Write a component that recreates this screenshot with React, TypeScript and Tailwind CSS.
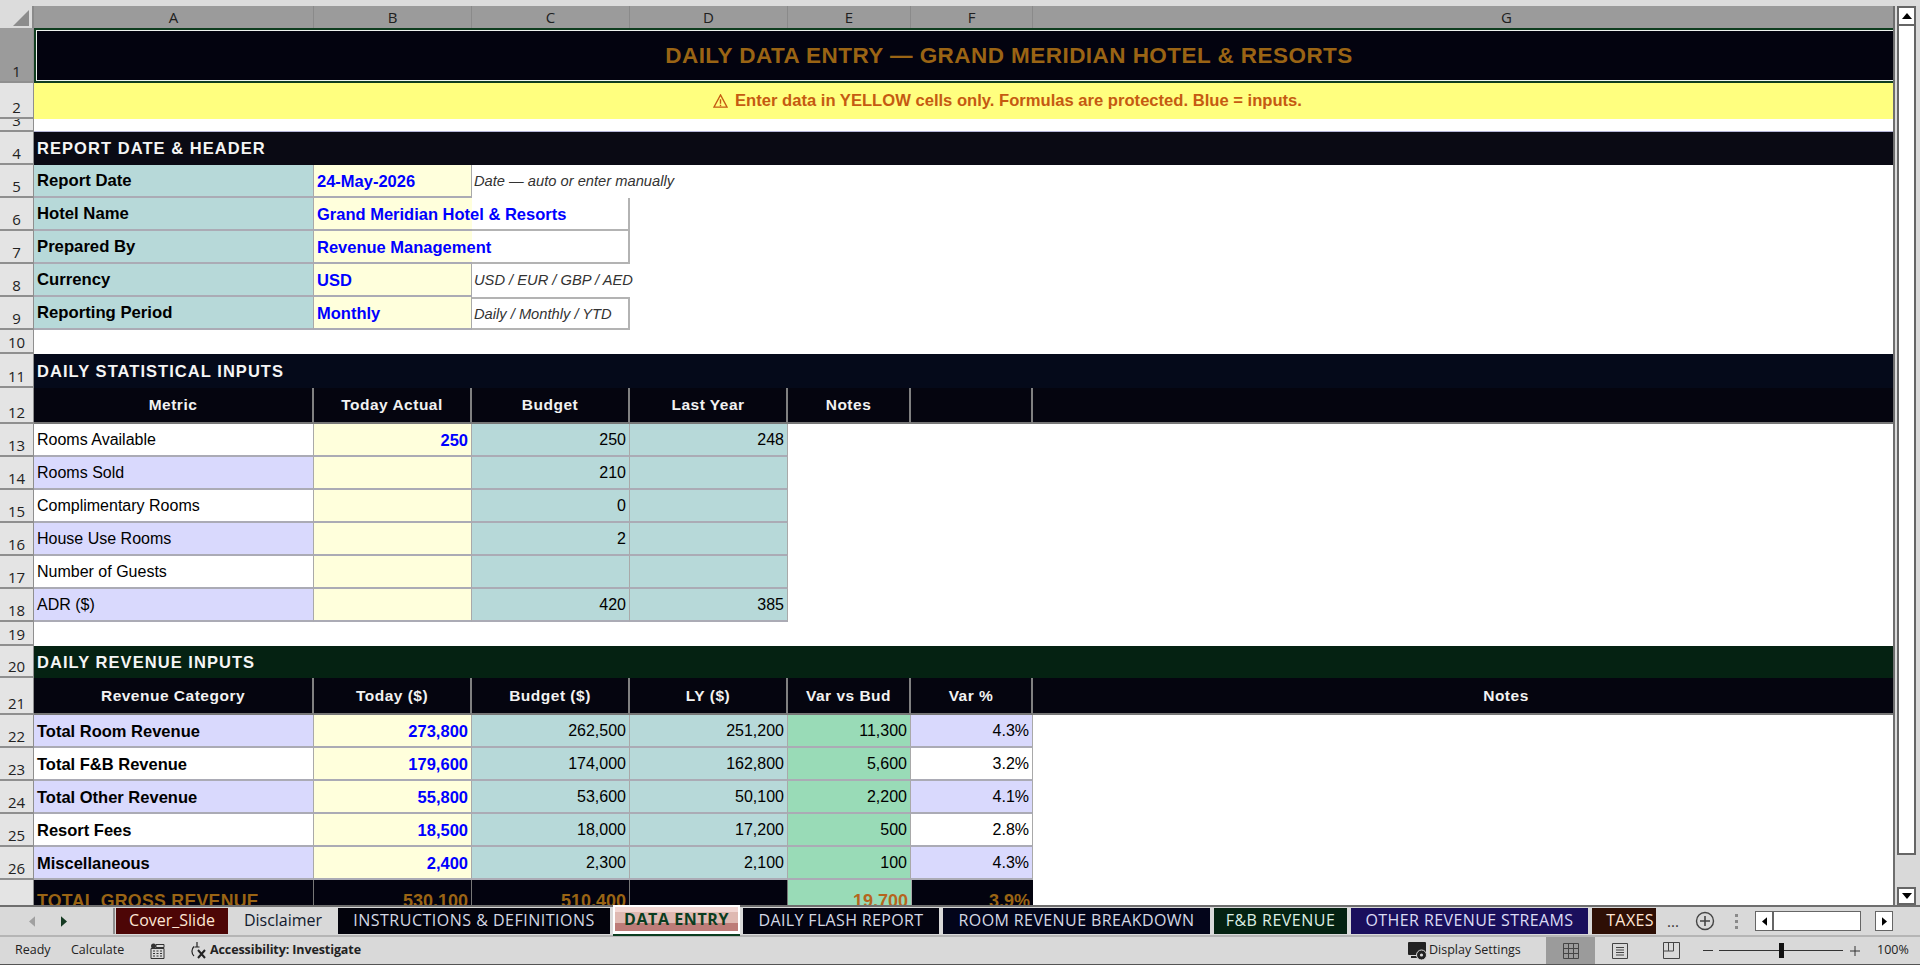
import React from 'react';

const cols = 'grid grid-cols-[34px_280px_158px_158px_158px_123px_122px_948px]';

const A = 'flex items-center px-[3px] pt-[1px] whitespace-nowrap overflow-visible relative';
const line = 'border-b-2 border-r border-b-[#ababb5] border-r-[#a9a9a9]';
const teal = `${A} ${line} bg-[#b7d9d9] text-black`;
const inputCell = `${A} ${line} bg-[#ffffdc] text-[#0000ff] font-bold text-[16.5px]`;
const note = 'flex items-center px-[2px] whitespace-nowrap text-[#333333] italic text-[14.7px]';
const num = 'justify-end';
const lav = 'bg-[#d9d9fd]';
const wht = 'bg-white';
const hdr = 'flex items-center justify-center bg-[#05050f] text-[#f2f2f2] font-bold tracking-[0.5px] border-b-2 border-r-2 border-b-[#777777] border-r-[#808080] text-[15.5px] whitespace-nowrap';

function RowHead({ n, selected }: { n: number; selected?: boolean }) {
  return (
    <div
      className={`flex items-end justify-center overflow-hidden border-b-2 border-r border-b-[#8f8f8f] border-r-[#8f8f8f] pb-[2px] text-[15px] leading-[15px] text-[#222222] [font-family:'Open_Sans',sans-serif] ${
        selected ? 'bg-[#9b9b9b]' : 'bg-[#e4e4e4]'
      }`}
    >
      {n}
    </div>
  );
}

function Row({ n, h, children, selected }: { n: number; h: string; children?: React.ReactNode; selected?: boolean }) {
  return (
    <div className={`${cols} ${h} shrink-0`}>
      <RowHead n={n} selected={selected} />
      {children}
    </div>
  );
}

const Section = ({ title, bg }: { title: string; bg: string }) => (
  <div className={`col-span-7 flex items-center px-[3px] text-[16.5px] font-bold tracking-[1.05px] text-[#f5f5f5] ${bg}`}>{title}</div>
);

const statRows = [
  { label: 'Rooms Available', today: '250', bud: '250', ly: '248', bg: wht },
  { label: 'Rooms Sold', today: '', bud: '210', ly: '', bg: lav },
  { label: 'Complimentary Rooms', today: '', bud: '0', ly: '', bg: wht },
  { label: 'House Use Rooms', today: '', bud: '2', ly: '', bg: lav },
  { label: 'Number of Guests', today: '', bud: '', ly: '', bg: wht },
  { label: 'ADR ($)', today: '', bud: '420', ly: '385', bg: lav },
];

const revRows = [
  { label: 'Total Room Revenue', today: '273,800', bud: '262,500', ly: '251,200', vb: '11,300', pct: '4.3%', bg: lav },
  { label: 'Total F&B Revenue', today: '179,600', bud: '174,000', ly: '162,800', vb: '5,600', pct: '3.2%', bg: wht },
  { label: 'Total Other Revenue', today: '55,800', bud: '53,600', ly: '50,100', vb: '2,200', pct: '4.1%', bg: lav },
  { label: 'Resort Fees', today: '18,500', bud: '18,000', ly: '17,200', vb: '500', pct: '2.8%', bg: wht },
  { label: 'Miscellaneous', today: '2,400', bud: '2,300', ly: '2,100', vb: '100', pct: '4.3%', bg: lav },
];

const headerRows = [
  { n: 5, label: 'Report Date', value: '24-May-2026', note: 'Date — auto or enter manually', kind: 'plain' },
  { n: 6, label: 'Hotel Name', value: 'Grand Meridian Hotel & Resorts', note: '', kind: 'merged' },
  { n: 7, label: 'Prepared By', value: 'Revenue Management', note: '', kind: 'merged' },
  { n: 8, label: 'Currency', value: 'USD', note: 'USD / EUR / GBP / AED', kind: 'plain' },
  { n: 9, label: 'Reporting Period', value: 'Monthly', note: 'Daily / Monthly / YTD', kind: 'boxed' },
];

const tabs = [
  { t: 'Cover_Slide', w: 'w-[112px]', c: 'bg-[#4d0606] text-[#ffe6d5]' },
  { t: 'Disclaimer', w: 'w-[106px]', c: 'text-[#10182c]' },
  { t: 'INSTRUCTIONS & DEFINITIONS', w: 'w-[272px]', c: 'bg-[#03030c] text-[#d5d9e6] tracking-[0.5px]' },
];
const tabsRight = [
  { t: 'DAILY FLASH REPORT', w: 'w-[196px]', c: 'bg-[#03030f] text-[#d5d9e6] tracking-[0.35px] justify-center' },
  { t: 'ROOM REVENUE BREAKDOWN', w: 'w-[267px]', c: 'bg-[#03051a] text-[#d5d9e6] tracking-[0.4px] justify-center' },
  { t: 'F&B REVENUE', w: 'w-[133px]', c: 'bg-[#042211] text-[#dff0e6] tracking-[0.5px] justify-center' },
  { t: 'OTHER REVENUE STREAMS', w: 'w-[237px]', c: 'bg-[#1a0f5c] text-[#dcdcf5] tracking-[0.4px] justify-center' },
  { t: 'TAXES', w: 'w-[64px]', c: 'bg-[#2e0f05] text-[#ffe6d5] tracking-[0.4px] justify-end pr-[2px]' },
];

function Triangle({ dir, className }: { dir: 'up' | 'down' | 'left' | 'right'; className?: string }) {
  const pts = { up: '0,7 12,7 6,0', down: '0,0 12,0 6,7', left: '7,0 7,12 0,6', right: '0,0 0,12 7,6' }[dir];
  const box = dir === 'up' || dir === 'down' ? '0 0 12 7' : '0 0 7 12';
  return (
    <svg viewBox={box} className={className}>
      <polygon points={pts} fill="currentColor" />
    </svg>
  );
}

export default function App() {
  return (
    <div className="flex h-[965px] w-[1920px] flex-col overflow-hidden bg-[#d9d9d9] text-[16px] [font-family:'Liberation_Sans',Arial,sans-serif]">
      <div className="h-[6px] shrink-0 bg-[#dcdcdc]" />
      <div className="flex h-[899px] shrink-0">
        {/* sheet */}
        <div className="flex h-full w-[1893px] shrink-0 flex-col overflow-hidden bg-white">
          <div className={`${cols} h-[22px] shrink-0 bg-[#9b9b9b] text-[15px] text-[#202020] [font-family:'Open_Sans',sans-serif]`}>
            <div className="relative overflow-hidden border-r-2 border-r-[#8a8a8a] bg-[#dcdcdc]">
              <svg viewBox="0 0 16 16" className="absolute bottom-[2px] right-[3px] h-[16px] w-[16px]">
                <polygon points="0,16 16,16 16,0" fill="#8c8c8c" />
              </svg>
            </div>
            {['A', 'B', 'C', 'D', 'E', 'F', 'G'].map((l) => (
              <div key={l} className="flex items-center justify-center border-r border-r-[#8a8a8a] leading-none">
                {l}
              </div>
            ))}
          </div>

          <Row n={1} h="h-[55px]" selected>
            <div className="col-span-7 flex border-y-2 border-l-2 border-[#0f3d1f] bg-[#03030f]">
              <div className="flex flex-1 items-center justify-center whitespace-nowrap border-y border-l border-[#eef2ee] text-[22.5px] font-bold tracking-[0.45px] text-[#9a6414]">
                DAILY DATA ENTRY — GRAND MERIDIAN HOTEL &amp; RESORTS
              </div>
            </div>
          </Row>
          <Row n={2} h="h-[36px]">
            <div className="col-span-7 flex items-center justify-center gap-[7px] bg-[#ffff7f] text-[16.6px] font-bold text-[#c55a11]">
              <svg viewBox="0 0 16 15" className="h-[14px] w-[15px]">
                <path d="M8 1 15 14H1Z" fill="none" stroke="currentColor" strokeWidth="1.4" />
                <path d="M8 5.5v5M8 11.5v1.5" stroke="currentColor" strokeWidth="1.5" />
              </svg>
              <span>Enter data in YELLOW cells only. Formulas are protected. Blue = inputs.</span>
            </div>
          </Row>
          <Row n={3} h="h-[13px]">
            <div className="col-span-7 border-b border-b-[#b6b6d8] bg-white" />
          </Row>
          <Row n={4} h="h-[33px]">
            <Section title="REPORT DATE & HEADER" bg="bg-[#0a0a14] pb-[1px]" />
          </Row>
          {headerRows.map((r) => (
            <Row key={r.n} n={r.n} h="h-[33px]">
              <div className={`${teal} text-[16.7px] font-bold`}>{r.label}</div>
              <div className={`${inputCell} ${r.kind === 'merged' ? 'z-10 border-r-0' : ''}`}>{r.value}</div>
              {r.kind === 'plain' && <div className={note}>{r.note}</div>}
              {r.kind === 'merged' && <div className="border-b-2 border-r-2 border-[#b3b3b3]" />}
              {r.kind === 'boxed' && <div className={`${note} border-y-2 border-r-2 border-[#b3b3b3] pt-[1px]`}>{r.note}</div>}
              <div className="col-span-4" />
            </Row>
          ))}
          <Row n={10} h="h-[24px]" />
          <Row n={11} h="h-[34px]">
            <Section title="DAILY STATISTICAL INPUTS" bg="bg-[#050a1a]" />
          </Row>
          <Row n={12} h="h-[36px]">
            <div className={hdr}>Metric</div>
            <div className={hdr}>Today Actual</div>
            <div className={hdr}>Budget</div>
            <div className={hdr}>Last Year</div>
            <div className={hdr}>Notes</div>
            <div className={hdr} />
            <div className={`${hdr} border-r-0`} />
          </Row>
          {statRows.map((r, i) => (
            <Row key={r.label} n={13 + i} h="h-[33px]">
              <div className={`${A} ${line} ${r.bg} text-black`}>{r.label}</div>
              <div className={`${inputCell} ${num}`}>{r.today}</div>
              <div className={`${teal} ${num}`}>{r.bud}</div>
              <div className={`${teal} ${num}`}>{r.ly}</div>
              <div className="col-span-3" />
            </Row>
          ))}
          <Row n={19} h="h-[24px]" />
          <Row n={20} h="h-[32px]">
            <Section title="DAILY REVENUE INPUTS" bg="bg-[#052212]" />
          </Row>
          <Row n={21} h="h-[37px]">
            <div className={hdr}>Revenue Category</div>
            <div className={hdr}>Today ($)</div>
            <div className={hdr}>Budget ($)</div>
            <div className={hdr}>LY ($)</div>
            <div className={hdr}>Var vs Bud</div>
            <div className={hdr}>Var %</div>
            <div className={`${hdr} border-r-0`}>Notes</div>
          </Row>
          {revRows.map((r, i) => (
            <Row key={r.label} n={22 + i} h="h-[33px]">
              <div className={`${A} ${line} ${r.bg} text-[16.5px] font-bold text-black`}>{r.label}</div>
              <div className={`${inputCell} ${num}`}>{r.today}</div>
              <div className={`${teal} ${num}`}>{r.bud}</div>
              <div className={`${teal} ${num}`}>{r.ly}</div>
              <div className={`${A} ${line} ${num} bg-[#99dbb7] text-black`}>{r.vb}</div>
              <div className={`${A} ${line} ${num} ${r.bg} text-black`}>{r.pct}</div>
              <div />
            </Row>
          ))}
          <Row n={27} h="h-[42px]">
            <div className={`${A} border-r border-r-[#777777] bg-[#03030f] text-[17.7px] font-bold tracking-[0.3px] text-[#9a6414]`}>TOTAL GROSS REVENUE</div>
            <div className={`${A} ${num} border-r border-r-[#777777] bg-[#03030f] text-[18px] font-bold text-[#9a6414]`}>530,100</div>
            <div className={`${A} ${num} border-r border-r-[#777777] bg-[#03030f] text-[18px] font-bold text-[#9a6414]`}>510,400</div>
            <div className={`${A} border-r border-r-[#777777] bg-[#03030f]`} />
            <div className={`${A} ${num} bg-[#99dbb7] text-[18px] font-bold text-[#b5651d]`}>19,700</div>
            <div className={`${A} ${num} border-l border-l-[#a9a9a9] bg-[#03030f] text-[18px] font-bold text-[#9a6414]`}>3.9%</div>
            <div />
          </Row>
        </div>

        {/* vertical scrollbar */}
        <div className="flex w-[27px] shrink-0 flex-col">
          <div className="flex h-full w-[23px] flex-col border-l-2 border-l-[#6e6e6e] pl-[2px]">
            <div className="flex h-[20px] w-[19px] items-center justify-center border-2 border-[#666666] bg-white">
              <Triangle dir="up" className="h-[6px] w-[10px] text-black" />
            </div>
            <div className="h-[829px] w-[19px] shrink-0 border-x-2 border-b-2 border-[#666666] bg-white" />
            <div className="flex-1" />
            <div className="flex h-[18px] w-[19px] items-center justify-center border-2 border-[#666666] bg-white">
              <Triangle dir="down" className="h-[6px] w-[10px] text-black" />
            </div>
          </div>
        </div>
      </div>

      {/* sheet tabs */}
      <div className="flex h-[32px] shrink-0 items-start border-y-2 border-[#6e6e6e] border-b-[#b5b5b5] bg-[#d9d9d9] text-[16px] leading-[22px] [font-family:'Open_Sans',sans-serif]">
        <div className="flex h-full w-[113px] shrink-0 items-center pl-[29px] pr-[13px]">
          <Triangle dir="left" className="h-[11px] w-[6px] text-[#a0a0a0]" />
          <Triangle dir="right" className="ml-[26px] h-[11px] w-[6px] text-[#153a22]" />
        </div>
        <div className="mt-[1px] flex h-[26px] items-stretch gap-[2px] border-l-2 border-l-[#8f8f8f] pl-[1px]">
          {tabs.map((t) => (
            <div key={t.t} className={`flex items-center justify-center whitespace-nowrap pb-[3px] ${t.w} ${t.c}`}>
              {t.t}
            </div>
          ))}
        </div>
        <div className="relative -mt-[2px] ml-[3px] flex h-[29px] w-[127px] shrink-0 items-center justify-center border-x-2 border-t-2 border-b-0 border-white bg-[linear-gradient(#f2d6d2_0%,#f2d6d2_20%,#dfb9b2_20%,#dfb9b2_60%,#bd7c78_60%,#bd7c78_100%)] pb-[3px] font-bold tracking-[0.6px] text-[#0b3d20] shadow-[inset_0_-3px_0_#ffffff]">
          DATA ENTRY
          <div className="absolute inset-x-[-2px] bottom-[-2px] h-[2px] bg-[#0b3d20]" />
        </div>
        <div className="mt-[1px] ml-[3px] flex h-[26px] items-stretch gap-[4px]">
          {tabsRight.map((t) => (
            <div key={t.t} className={`flex items-center whitespace-nowrap pb-[3px] ${t.w} ${t.c}`}>
              {t.t}
            </div>
          ))}
        </div>
        <div className="flex h-full flex-1 items-center">
          <span className="ml-[11px] w-[20px] text-[15px] leading-[22px] text-[#333333]">...</span>
          <svg viewBox="0 0 20 20" className="ml-[8px] h-[20px] w-[20px] text-[#444444]">
            <circle cx="10" cy="10" r="8.5" fill="none" stroke="currentColor" strokeWidth="1.4" />
            <path d="M10 5v10M5 10h10" stroke="currentColor" strokeWidth="1.6" />
          </svg>
          <div className="ml-[20px] flex h-[15px] w-[3px] flex-col justify-between">
            <div className="h-[3px] bg-[#8a8a8a]" />
            <div className="h-[3px] bg-[#8a8a8a]" />
            <div className="h-[3px] bg-[#8a8a8a]" />
          </div>
          <div className="ml-[17px] flex h-[20px] w-[106px] items-stretch border border-[#666666] bg-white">
            <div className="flex w-[18px] items-center justify-center border-r-2 border-r-[#666666]">
              <Triangle dir="left" className="h-[9px] w-[5px] text-black" />
            </div>
          </div>
          <div className="ml-[14px] flex h-[20px] w-[18px] items-center justify-center border border-[#666666] bg-white">
            <Triangle dir="right" className="h-[9px] w-[5px] text-black" />
          </div>
        </div>
      </div>

      {/* status bar */}
      <div className="flex h-[28px] shrink-0 items-center border-b border-b-[#555555] bg-[#d9d9d9] text-[12.5px] text-[#222222] [font-family:'Open_Sans',sans-serif]">
        <div className="flex w-[1408px] shrink-0 items-center whitespace-nowrap">
          <span className="ml-[15px] w-[36px]">Ready</span>
          <span className="ml-[20px] w-[51px]">Calculate</span>
          <svg viewBox="0 0 15 16" className="ml-[28px] h-[16px] w-[15px] text-[#333333]">
            <circle cx="3.5" cy="3" r="2.5" fill="currentColor" />
            <path d="M1 5.5h13v10H1z M6 1.5h8v3H6z" fill="none" stroke="currentColor" strokeWidth="1" />
            <path d="M3 8h2M6.5 8h2M10 8h2M3 10.5h2M6.5 10.5h2M10 10.5h2M3 13h2M6.5 13h2M10 13h2" stroke="currentColor" strokeWidth="1.2" />
          </svg>
          <svg viewBox="0 0 20 18" className="ml-[24px] h-[18px] w-[20px] text-[#222222]">
            <path d="M5 4.5A6.5 6.5 0 0 0 5 14" fill="none" stroke="currentColor" strokeWidth="1.2" />
            <path d="M8 0v5M5.5 5h5" stroke="currentColor" strokeWidth="1.2" />
            <path d="M9 8l7 8M16 8l-7 8" stroke="currentColor" strokeWidth="2" />
          </svg>
          <span className="ml-[1px] font-bold tracking-[-0.1px]">Accessibility: Investigate</span>
        </div>
        <svg viewBox="0 0 20 20" className="h-[20px] w-[20px] shrink-0">
          <rect x="0" y="1" width="18" height="13" rx="1" fill="#222222" />
          <rect x="3" y="15" width="6" height="2" fill="#222222" />
          <circle cx="13.5" cy="14" r="5" fill="#222222" stroke="#d9d9d9" />
          <circle cx="13.5" cy="14" r="1.6" fill="#d9d9d9" />
        </svg>
        <span className="ml-[1px] w-[117px] shrink-0 whitespace-nowrap">Display Settings</span>
        <div className="flex h-full w-[49px] shrink-0 items-center justify-center bg-[#9b9b9b]">
          <svg viewBox="0 0 16 16" className="h-[16px] w-[16px] text-[#444444]">
            <path d="M.5.5h15v15H.5zM5.5.5v15M10.5.5v15M.5 5.5h15M.5 10.5h15" fill="none" stroke="currentColor" />
          </svg>
        </div>
        <svg viewBox="0 0 16 16" className="ml-[17px] h-[16px] w-[16px] shrink-0 text-[#444444]">
          <path d="M.5.5h15v15H.5zM4 4.5h8M4 7h8M4 9.5h8M4 12h8" fill="none" stroke="currentColor" />
        </svg>
        <svg viewBox="0 0 17 17" className="ml-[35px] h-[17px] w-[17px] shrink-0 text-[#444444]">
          <path d="M.5 9v7.5h16V.5h-16V9h10V.5M5.5.5V9" fill="none" stroke="currentColor" />
        </svg>
        <span className="ml-[23px] h-[1px] w-[10px] shrink-0 bg-[#333333]" />
        <div className="relative ml-[6px] h-[1px] w-[124px] shrink-0 bg-[#333333]">
          <div className="absolute left-[60px] top-[-7px] h-[15px] w-[5px] bg-[#111111]" />
        </div>
        <svg viewBox="0 0 10 10" className="ml-[7px] h-[10px] w-[10px] shrink-0 text-[#333333]">
          <path d="M5 0v10M0 5h10" stroke="currentColor" />
        </svg>
        <span className="ml-[17px] whitespace-nowrap">100%</span>
      </div>
    </div>
  );
}
